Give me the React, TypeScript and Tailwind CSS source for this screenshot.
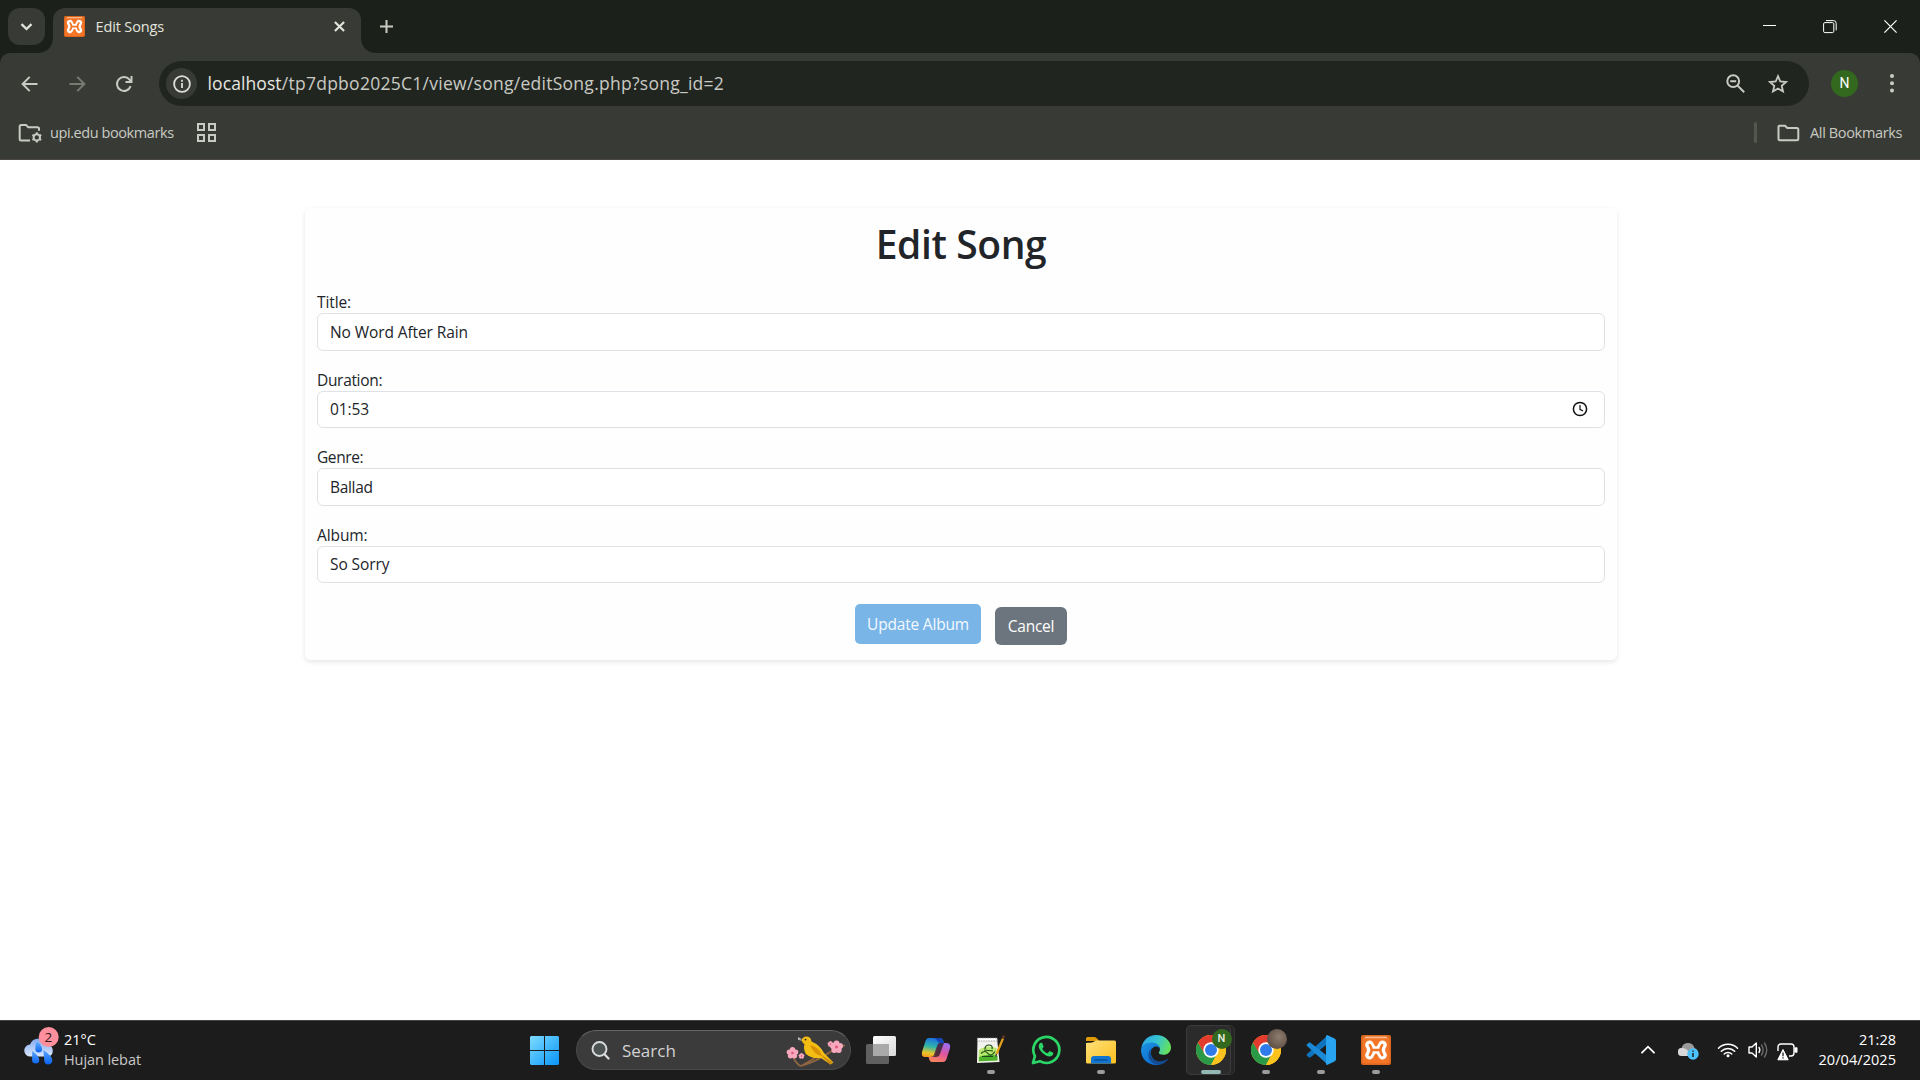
import type { ReactNode } from "react";

function T({ className, children }: { className?: string; children: ReactNode }) {
  return <span className={"whitespace-pre " + (className ?? "")}>{children}</span>;
}

function Xampp({ size }: { size: number }) {
  return (
    <svg width={size} height={size} viewBox="0 0 30 30" fill="none" strokeLinecap="round" strokeLinejoin="round">
      <rect width="30" height="30" rx="2" fill="#d9661c" />
      <rect x="1.5" y="2.5" width="27" height="26" rx="2" fill="#f47527" />
      <path d="M4.5 2.4h21" stroke="#f9b98a" strokeWidth="1.6" />
      <path d="M8.500 9.800Q12 15 8.500 20.200M21.500 9.800Q18 15 21.500 20.200" stroke="#fff" strokeWidth="8.6" />
      <path d="M10 15h10" stroke="#fff" strokeWidth="7.4" />
      <path d="M8.800 10Q12.400 15 8.800 20M21.200 10Q17.600 15 21.200 20M10.800 15h8.400" stroke="#f47527" strokeWidth="2.5" />
    </svg>
  );
}

function TabStrip() {
  return (
    <div className="flex h-[53px] bg-[#1c201b] text-[#e3e4dd]">
      <div className="mt-2 ml-2 flex size-[37px] items-center justify-center rounded-[12px] bg-[#383b35]">
        <svg width="13" height="8" viewBox="0 0 13 8" fill="none" stroke="currentColor" strokeWidth="2.3">
          <path d="M1.5 1.2l5 4.8 5-4.8" />
        </svg>
      </div>
      <svg className="mt-[37px] -ml-2" width="16" height="16" viewBox="0 0 16 16">
        <path d="M16 0v16H0C10 16 16 10 16 0z" fill="#383b35" />
      </svg>
      <div className="mt-2 flex h-[45px] w-[308px] rounded-t-[12px] bg-[#383b35] pl-[11px]">
        <div className="mt-2">
          <Xampp size={21} />
        </div>
        <T className="mt-[7px] ml-[10.5px] text-[14.5px] leading-6 tracking-[-0.14px]">Edit Songs</T>
        <svg className="mt-[13px] mr-[16px] ml-auto" width="11" height="11" viewBox="0 0 11 11" stroke="currentColor" strokeWidth="2.1">
          <path d="M.9.9l9.2 9.2M10.1.9L.9 10.1" />
        </svg>
      </div>
      <svg className="mt-[37px]" width="16" height="16" viewBox="0 0 16 16">
        <path d="M0 0v16h16C6 16 0 10 0 0z" fill="#383b35" />
      </svg>
      <svg className="mt-5 ml-[3px]" width="13" height="13" viewBox="0 0 13 13" stroke="#c9cbc3" strokeWidth="2">
        <path d="M6.5 0v13M0 6.5h13" />
      </svg>
      <div className="mr-[23px] ml-auto flex text-white">
        <svg className="mt-[25px]" width="13" height="1">
          <rect width="13" height="1" fill="#fff" />
        </svg>
        <svg className="mt-5 ml-[47px]" width="14" height="14" viewBox="0 0 14 14" fill="none" stroke="currentColor">
          <rect x=".6" y="2.6" width="10.2" height="10" rx="1.3" />
          <path d="M3 .6h7.5q2.7 0 2.7 2.7v7" />
        </svg>
        <svg className="mt-5 ml-[47px]" width="13" height="13" viewBox="0 0 13 13" stroke="currentColor" strokeWidth="1.2">
          <path d="M.4.4l12.2 12.2M12.6.4L.4 12.6" />
        </svg>
      </div>
    </div>
  );
}

function Toolbar() {
  return (
    <div className="bg-[#1c201b]">
      <div className="flex h-[61px] items-center rounded-t-[10px] bg-[#383b35] text-[#c9cac3]">
        <svg className="ml-[21px]" width="17" height="16" viewBox="0 0 17 16" fill="none" stroke="currentColor" strokeWidth="2">
          <path d="M16.5 8H2M8.7.9L1.6 8l7.1 7.1" />
        </svg>
        <svg className="ml-[31px] text-[#777a73]" width="17" height="16" viewBox="0 0 17 16" fill="none" stroke="currentColor" strokeWidth="2">
          <path d="M.5 8H15M8.3.9L15.4 8l-7.1 7.1" />
        </svg>
        <svg className="ml-[29px]" width="18" height="18" viewBox="0 0 18 18" fill="none" stroke="currentColor" strokeWidth="2">
          <path d="M15.6 11.2A7 7 0 1 1 14.5 4.6L16 6.3" />
          <path d="M16.5 1v6h-6" />
        </svg>
        <div className="ml-[26px] flex h-[45px] w-[1650px] items-center rounded-full bg-[#212520]">
          <div className="ml-[7px] flex size-[31px] items-center justify-center rounded-full bg-[#383b35] text-[#dddeda]">
            <svg width="18" height="18" viewBox="0 0 18 18" fill="none" stroke="currentColor" strokeWidth="1.8">
              <circle cx="9" cy="9" r="7.9" />
              <path d="M9 8v5M9 4.8v1.9" />
            </svg>
          </div>
          <T className="ml-[10.5px] text-[17.5px] tracking-[0.1px] text-[#e6e7e1]">localhost</T>
          <T className="text-[17.5px] tracking-[0.27px]">/tp7dpbo2025C1/view/song/editSong.php?song_id=2</T>
          <svg className="ml-auto" width="19" height="19" viewBox="0 0 19 19" fill="none" stroke="currentColor" strokeWidth="2">
            <circle cx="7.2" cy="7.2" r="5.9" />
            <path d="M11.6 11.6l6.6 6.6M4.2 7.2h6" />
          </svg>
          <svg className="mr-[21px] ml-[23px]" width="20" height="20" viewBox="0 0 20 20" fill="none" stroke="currentColor" strokeWidth="1.8">
            <path d="M10 2.2l2.3 5.3 5.8.5-4.4 3.8 1.3 5.7-5-3-5 3 1.3-5.7L1.9 8l5.8-.5z" />
          </svg>
        </div>
        <div className="ml-[22px] flex size-[27px] items-center justify-center rounded-full bg-[#33691e] font-['Roboto'] text-[14px] text-white">N</div>
        <svg className="ml-[32px]" width="4" height="19" viewBox="0 0 4 19" fill="currentColor">
          <circle cx="2" cy="2" r="2" />
          <circle cx="2" cy="9.3" r="2" />
          <circle cx="2" cy="16.6" r="2" />
        </svg>
      </div>
    </div>
  );
}

function Bookmarks() {
  return (
    <div className="flex h-[46px] items-center border-b border-[#4a4743] bg-[#383b35] pb-[8px] text-[14.5px] text-[#c9cac3]">
      <svg className="mt-[2px] ml-[18px]" width="25" height="21" viewBox="0 0 25 21" fill="none" stroke="currentColor" strokeWidth="2">
        <path d="M12 17.5H3.2q-1.500 0-1.500-1.500V3.400q0-1.500 1.500-1.500H8l2.200 2.300h9.300q1.500 0 1.500 1.500v2" />
        <circle cx="18.800" cy="14.400" r="3.200" />
        <path d="M18.800 9.300v2M18.800 17.500v2M14.400 11.800l1.700 1M21.500 16l1.700 1M14.400 17l1.700-1M21.500 12.800l1.700-1" />
      </svg>
      <T className="ml-[7px] w-[125px] tracking-[-0.42px]">upi.edu bookmarks</T>
      <svg className="ml-[22px]" width="19" height="19" viewBox="0 0 19 19" fill="none" stroke="currentColor" strokeWidth="2">
        <path d="M1 1h6v6H1zM12 1h6v6h-6zM1 12h6v6H1zM12 12h6v6h-6z" />
      </svg>
      <div className="ml-auto h-[21px] w-[3px] rounded-full bg-[#53564f]" />
      <svg className="ml-[20px]" width="23" height="18" viewBox="0 0 23 18" fill="none" stroke="currentColor" strokeWidth="2">
        <path d="M2.300 1.700H8l2.300 2.300h9.500q1.500 0 1.500 1.500v9.300q0 1.500-1.500 1.500H3q-1.500 0-1.500-1.500V2.500z" />
      </svg>
      <T className="mr-[17px] ml-[10px] w-[93px] tracking-[-0.35px]">All Bookmarks</T>
    </div>
  );
}

function Field({ label, value, labelClass, valueClass, clock }: { label: string; value: string; labelClass?: string; valueClass?: string; clock?: boolean }) {
  return (
    <div className="mb-4">
      <div className="h-6 leading-[26px]">
        <T className={labelClass}>{label}</T>
      </div>
      <div className="flex h-[37.6px] items-center rounded-[6px] border border-[#dee2e6] bg-white px-3">
        <T className={"pt-px " + (valueClass ?? "")}>{value}</T>
        {clock && (
          <svg className="mr-[4px] ml-auto" width="16" height="16" viewBox="0 0 16 16" fill="none" stroke="#111" strokeWidth="1.5">
            <circle cx="8" cy="8" r="6.6" />
            <path d="M8 4v4.300l3 1.700" strokeWidth="1.2" />
          </svg>
        )}
      </div>
    </div>
  );
}

function Page() {
  return (
    <main className="h-[860px] bg-white pt-12 pl-[305px] text-[15.5px] text-[#212529]">
      <div className="flex h-[452px] w-[1312px] flex-col rounded-[5px] bg-[#fefefe] px-3 pt-3 shadow-[0_2px_5px_rgba(0,0,0,0.1)]">
        <h1 className="mb-[22px] text-center text-[39px] leading-[47px] font-semibold">
          <T className="tracking-[-0.4px]">Edit Song</T>
        </h1>
        <Field label="Title:" value="No Word After Rain" labelClass="tracking-[-0.1px]" valueClass="tracking-[-0.1px]" />
        <Field label="Duration:" value="01:53" labelClass="tracking-[-0.32px]" valueClass="tracking-[-0.1px]" clock />
        <Field label="Genre:" value="Ballad" labelClass="tracking-[-0.4px]" valueClass="tracking-[-0.33px]" />
        <Field label="Album:" value="So Sorry" labelClass="tracking-[-0.1px]" valueClass="tracking-[-0.1px]" />
        <div className="mt-[4.6px] flex items-start justify-center gap-[14px]">
          <button className="flex h-10 w-[126px] items-center justify-center rounded-[5px] bg-[#7ab5e8] pt-px text-[#f3f9fe]">
            <T className="tracking-[-0.2px]">Update Album</T>
          </button>
          <button className="mt-[3px] flex h-[38px] w-[72px] items-center justify-center rounded-[6px] bg-[#6c757d] pt-px text-white">
            <T className="tracking-[-0.25px]">Cancel</T>
          </button>
        </div>
      </div>
    </main>
  );
}

function Weather() {
  return (
    <svg width="35" height="38" viewBox="0 0 35 38">
      <defs>
        <linearGradient id="cloud" x1="0" y1="0" x2="0" y2="1">
          <stop offset="0" stopColor="#7fa9ee" />
          <stop offset="1" stopColor="#dbe7fb" />
        </linearGradient>
        <linearGradient id="drop" x1="0" y1="0" x2="0" y2="1">
          <stop offset="0" stopColor="#5aa7ff" />
          <stop offset="1" stopColor="#0a62f0" />
        </linearGradient>
      </defs>
      <path d="M6.500 29.500a6 6 0 0 1-.5-12Q8 11.500 15 11.500t9.500 6.500a6 6 0 0 1 0 11.500z" fill="url(#cloud)" />
      <path d="M14.500 15.500q3.500 4 3.500 6.800a3.300 3.300 0 0 1-6.600 0q0-3 .6-6.800z" fill="url(#drop)" />
      <path d="M8.300 24q7 5 7 9a3.600 3.600 0 0 1-7.200 0zM19.300 23q9 6 9 10.300a4 4 0 0 1-8 .2z" fill="url(#drop)" />
      <circle cx="24.700" cy="10" r="10" fill="#ff8f9c" />
    </svg>
  );
}

function Flower({ x, y, s }: { x: number; y: number; s: number }) {
  return (
    <g transform={`translate(${x} ${y}) scale(${s})`}>
      <g fill="#f7a8bd">
        <circle cx="0" cy="-3.600" r="3" />
        <circle cx="3.500" cy="-1" r="3" />
        <circle cx="2.200" cy="3" r="3" />
        <circle cx="-2.200" cy="3" r="3" />
        <circle cx="-3.500" cy="-1" r="3" />
      </g>
      <circle r="1.400" fill="#e0557c" />
    </g>
  );
}

function Bird() {
  return (
    <svg width="60" height="32" viewBox="0 0 60 32" fill="none">
      <path d="M7 21q4 8 8 9Q32 25 44 16q8-3 15-7M15 30l14-8" stroke="#8f6440" strokeWidth="1.700" />
      <path d="M12 4l4.500-.5L12 1z" fill="#b9b9b9" />
      <path d="M12 5.500l5-1v-2z" fill="#777" />
      <path d="M15.500 4.500Q17 0 21 .5q4 .5 4.500 5Q34 9 38 17l9.500 9.500-3 2L35 22q-10 1-15-4-3-5-1.500-10-2-1-3-3.500z" fill="#f4bd14" />
      <path d="M24 9q9 2 12 11-8-1-12-11z" fill="#d99206" />
      <path d="M34 18l13 8.500-3 2z" fill="#c98a10" />
      <circle cx="19.500" cy="3.600" r=".9" fill="#222" />
      <Flower x={6.5} y={17} s={0.9} />
      <Flower x={15.5} y={20} s={0.45} />
      <Flower x={50.5} y={11} s={1} />
      <Flower x={44.5} y={8} s={0.45} />
    </svg>
  );
}

function Copilot() {
  return (
    <svg width="30" height="30" viewBox="0 0 30 30">
      <defs>
        <linearGradient id="cpA" x1=".5" y1="0" x2=".3" y2="1">
          <stop offset="0" stopColor="#1d6fe0" />
          <stop offset=".45" stopColor="#2fb5a8" />
          <stop offset=".8" stopColor="#e8c52a" />
          <stop offset="1" stopColor="#f59a23" />
        </linearGradient>
        <linearGradient id="cpB" x1=".7" y1="0" x2=".3" y2="1">
          <stop offset="0" stopColor="#9a6cf0" />
          <stop offset=".5" stopColor="#e0559f" />
          <stop offset="1" stopColor="#f9845a" />
        </linearGradient>
      </defs>
      <path d="M8 3h11q2.500 0 3.200 2.500L23 8h-4q-2 0-2.700 2.500L13 20q-1 2-3 2H4q-4 0-3-5L4.500 6Q5.500 3 8 3z" fill="url(#cpA)" />
      <path d="M12 3h7q2.500 0 3.200 2.500L23 8h-4q-2-.3-3-2.500T12 3z" fill="#1546b8" />
      <path d="M22 27H11q-2 0-2.500-2L7.500 22H11q2 0 2.700-2.500L17 10q.7-2 3-2h5q5 0 4 5l-3.500 11Q24.500 27 22 27z" fill="url(#cpB)" />
      <path d="M13.500 20.500L17 10q.6-1.700 2.200-2L23 8l-4.500 12q-1 2-3.500 2h-3q1 0 1.500-1.500z" fill="#1c1c1c" opacity=".75" />
    </svg>
  );
}

function NotepadPP() {
  return (
    <svg width="30" height="30" viewBox="0 0 30 30" fill="none">
      <path d="M1.500 3h19.500l2.500 24-22.500 1z" fill="#f2f2ee" />
      <path d="M1.500 3h19.500l.3 3H1.400z" fill="#fff" stroke="#888" strokeWidth=".8" strokeDasharray="1.500 1" />
      <path d="M3 15q8-6 17.500-2l1 12.500-19 1z" fill="#b9e86f" />
      <path d="M3 22q9-4 18.500-1v4.500L3 26.300z" fill="#4fb32d" />
      <path d="M5 18.500q4-4 7 0t7-2M6 21.500h11M9 14q0-4 4-4t3 4M8 15l9 1" stroke="#1d4d16" strokeWidth="1.200" />
      <path d="M20.500 19l6.500-15.500" stroke="#e5a01a" strokeWidth="2.200" />
      <path d="M27 3.500l1-3" stroke="#6b3a2a" strokeWidth="2.200" />
      <path d="M19.700 21.500l.8-2.500" stroke="#444" strokeWidth="1.500" />
    </svg>
  );
}

function WhatsApp() {
  return (
    <svg width="30" height="30" viewBox="0 0 30 30" fill="none">
      <path d="M2 28l1.900-6.900A13 13 0 1 1 8.900 26.200z" stroke="#2bd566" strokeWidth="2.700" strokeLinejoin="round" />
      <path d="M10.200 7.800c.5 0 .9 0 1.200.8l1.100 2.700c.2.600-.2 1.200-1 2-.2.300-.2.500 0 .9 1 1.800 2.700 3.200 4.500 3.900.4.200.7.100.9-.2l1.200-1.400c.3-.4.6-.4 1-.2l2.700 1.300c.5.200.6.500.5 1-.3 2-2 3-3.700 3-4.800-.5-10.300-5.600-10.900-9.800 0-1.800.9-4 2.500-4z" fill="#2bd566" />
    </svg>
  );
}

function Explorer() {
  return (
    <svg width="30" height="30" viewBox="0 0 30 30">
      <defs>
        <linearGradient id="fol" x1="0" y1="0" x2="1" y2="1">
          <stop offset="0" stopColor="#ffe07a" />
          <stop offset="1" stopColor="#fcbf1e" />
        </linearGradient>
      </defs>
      <path d="M0 3.500Q0 2 1.500 2h7q1 0 2 1l3 3H0z" fill="#e09a06" />
      <path d="M0 8q7 0 10-2.500h18.500q1.500 0 1.500 1.500v20q0 1.500-1.500 1.500h-27Q0 28.500 0 27z" fill="url(#fol)" />
      <path d="M5 28.500V24q0-3 3-3h14q3 0 3 3v4.500z" fill="#1275cf" />
      <path d="M8.500 25h13" stroke="#0a4c96" strokeWidth="1.300" />
    </svg>
  );
}

function Edge() {
  return (
    <svg width="30" height="30" viewBox="0 0 30 30">
      <defs>
        <linearGradient id="eg1" x1="0" y1=".2" x2="1" y2=".5">
          <stop offset="0" stopColor="#2aa5ea" />
          <stop offset=".5" stopColor="#35c4d4" />
          <stop offset="1" stopColor="#66e25a" />
        </linearGradient>
        <linearGradient id="eg2" x1="0" y1="0" x2=".6" y2="1">
          <stop offset="0" stopColor="#1c93e0" />
          <stop offset="1" stopColor="#0c6cd0" />
        </linearGradient>
      </defs>
      <path d="M.2 13.500C1.500 5 8 0 15 0c9 0 15 6.500 15 12.500 0 4.500-3.500 7.300-7.500 7.300-3 0-4.700-1-4.700-2 0-.8 1.200-1.500 1.200-3.800 0-3-3-5.500-7-5.500C6 8.500 1 11 .2 13.500z" fill="url(#eg1)" />
      <path d="M0 15C0 11 4.500 7.500 11 7.500c4.500 0 8 3 8 6.500-1.500-2.500-4-3-6-2-3 1.500-4 5-2.500 9 1.500 4.500 6 8.500 9.500 8.300-1.600.5-3 .7-5 .7C6.500 30 0 23.500 0 15z" fill="url(#eg2)" />
      <path d="M11 12.800c-2.700 3-1.700 8 1.500 11 4 4 11.500 3 15.500-1-2 3.500-5 6.200-9 6.900C13 30 7.500 26.500 7.500 20c0-3 1.500-6 3.500-7.200z" fill="#134c92" />
    </svg>
  );
}

function Chrome({ badge }: { badge: ReactNode }) {
  return (
    <div className="relative size-[30px]">
      <svg width="30" height="30" viewBox="0 0 30 30">
        <circle cx="15" cy="15" r="15" fill="#fcc31e" />
        <path d="M2 7.500L8.900 18.800 15 22.200 21 18.500 15 30A15 15 0 0 1 2 7.500z" fill="#2a9a49" />
        <path d="M15 30l6.200-11.200L28 7.500A15 15 0 0 1 15 30z" fill="#fcc31e" />
        <path d="M2 7.500A15 15 0 0 1 28 7.500H15L8.500 18.600z" fill="#e33b2e" />
        <circle cx="15" cy="15" r="7.700" fill="#fff" />
        <circle cx="15" cy="15" r="6" fill="#2f7bea" />
      </svg>
      <div className="absolute -top-[6px] left-[15.5px]">{badge}</div>
    </div>
  );
}

function VSCode() {
  return (
    <svg width="30" height="30" viewBox="0 0 30 30">
      <path d="M21.500.5L1 19q-1 1 0 1.800l1.700 1.500q.8.600 1.800 0L22 8.500z" fill="#0f74bd" />
      <path d="M21.500 29.500L1 11q-1-1 0-1.800l1.700-1.500q.8-.6 1.800 0L22 21.500z" fill="#1a8ad6" />
      <path d="M21.500.2l7 3.300q1.500.8 1.500 2.300v18.400q0 1.500-1.500 2.300l-7 3.300q-1 .4-1.500-.8V1Q20.500-.2 21.500.2z" fill="#28a4f0" />
    </svg>
  );
}

function Cell({ children, dot = true }: { children: ReactNode; dot?: boolean }) {
  return (
    <div className="flex w-[55px] flex-col items-center pt-[14px]">
      {children}
      {dot && <div className="mt-[5px] h-1 w-2 rounded-full bg-[#9b9b9b]" />}
    </div>
  );
}

function Taskbar() {
  return (
    <div className="flex h-[60px] border-t border-[#404343] bg-[#1c1c1c] text-[14.5px] text-white">
      <div className="relative mt-[6px] ml-[24px]">
        <Weather />
        <span className="absolute top-0 left-[20.5px] text-[13.5px] leading-5 text-[#2a1215]">2</span>
      </div>
      <div className="mt-[9px] ml-[5px] flex w-[453px] flex-col items-start leading-5">
        <T>21°C</T>
        <T className="tracking-[-0.08px] text-[#c8c8c8]">Hujan lebat</T>
      </div>
      <Cell dot={false}>
        <svg className="mt-px" width="29" height="29" viewBox="0 0 29 29">
          <defs>
            <linearGradient id="win" x1="0" y1="0" x2="1" y2="1">
              <stop offset="0" stopColor="#7edcff" />
              <stop offset="1" stopColor="#0894fa" />
            </linearGradient>
          </defs>
          <path d="M1 0h13v14H0V1zM15 0h13l1 1v13H15zM0 15h14v14H1l-1-1zM15 15h14v13l-1 1H15z" fill="url(#win)" />
        </svg>
      </Cell>
      <div className="mt-[9px] ml-1 flex h-10 w-[275px] items-center rounded-full border border-[#4a4a4a] border-t-[#666] bg-[#3b3b3b]">
        <svg className="ml-[14px]" width="19" height="19" viewBox="0 0 19 19" fill="none" stroke="#d9dcdc" strokeWidth="1.900" strokeLinecap="round">
          <circle cx="8.500" cy="8" r="7" fill="#4d5252" />
          <path d="M13.500 13.300l4 4.200" strokeWidth="2.300" />
        </svg>
        <T className="ml-[12px] pt-[2px] text-[17px] text-[#d2d2d2]">Search</T>
        <div className="mt-[4px] mr-[4px] ml-auto">
          <Bird />
        </div>
      </div>
      <div className="ml-[2.5px] flex">
        <Cell dot={false}>
          <svg width="30" height="30" viewBox="0 0 30 30">
            <defs>
              <linearGradient id="tv" x1="0" y1="0" x2="1" y2="1">
                <stop offset="0" stopColor="#fff" />
                <stop offset="1" stopColor="#d8d8d8" />
              </linearGradient>
            </defs>
            <rect y="9" width="23" height="20" rx="1.500" fill="#606060" />
            <rect x="7" y="1" width="23" height="20" rx="1.500" fill="url(#tv)" />
            <rect x="7" y="9" width="16" height="12" fill="#a9a9a9" />
          </svg>
        </Cell>
        <Cell dot={false}><Copilot /></Cell>
        <Cell><NotepadPP /></Cell>
        <Cell dot={false}><WhatsApp /></Cell>
        <Cell><Explorer /></Cell>
        <Cell dot={false}><Edge /></Cell>
        <div className="flex w-[55px] pt-[4px] pl-[2.5px]">
          <div className="flex h-[50px] w-[49px] rounded-[5px] border border-[#333] bg-[#252525]">
            <div className="-mt-px -ml-px flex h-[50px] w-[45px] flex-col items-center rounded-[5px] border border-[#3b3b3b] bg-[#2b2b2b] pt-[9px] pl-[5px]">
              <Chrome badge={<div className="flex size-5 items-center justify-center rounded-full bg-[#33691e] font-['Roboto'] text-[11px] font-medium text-[#e8efe4]">N</div>} />
              <div className="mt-[5px] h-1 w-5 shrink-0 rounded-full bg-[#93b8b3]" />
            </div>
          </div>
        </div>
        <Cell>
          <Chrome badge={<div className="size-5 rounded-full bg-[radial-gradient(circle_at_60%_40%,#8d7d70,#6b5a4f_55%,#4d4038)]" />} />
        </Cell>
        <Cell><VSCode /></Cell>
        <Cell><Xampp size={30} /></Cell>
      </div>
      <svg className="mt-[24px] ml-[237px]" width="14" height="9" viewBox="0 0 14 9" fill="none" stroke="#fff" strokeWidth="1.800" strokeLinecap="round">
        <path d="M1 7.700l6-6 6 6" />
      </svg>
      <svg className="mt-[21px] ml-[23px]" width="21" height="18" viewBox="0 0 21 18">
        <path d="M4 14a4 4 0 0 1-.5-8Q5 1 10 1t6.500 5q3 1 3 4t-3 4z" fill="#9a9a9a" />
        <path d="M4 14a4 4 0 0 1 0-8q4 0 6 3l3 5z" fill="#d8d8d8" />
        <circle cx="15" cy="12" r="5.700" fill="#4cc2ff" />
        <path d="M15 11v4M15 8.500v1.300" stroke="#1c1c1c" strokeWidth="1.500" />
      </svg>
      <svg className="mt-[21px] ml-[18px]" width="22" height="16" viewBox="0 0 22 16" fill="none" stroke="#fff" strokeWidth="1.500" strokeLinecap="round">
        <path d="M1.500 6.200a13.300 13.300 0 0 1 19 0M4.300 9.200a9.400 9.400 0 0 1 13.400 0M7.200 12a5.400 5.400 0 0 1 7.600 0" />
        <circle cx="11" cy="13.800" r="1.500" fill="#fff" stroke="none" />
      </svg>
      <svg className="mt-[19px] ml-[9px]" width="21" height="20" viewBox="0 0 21 20" fill="none" stroke="#fff" strokeWidth="1.400" strokeLinecap="round" strokeLinejoin="round">
        <path d="M1 7h3l4.300-4v14L4 13H1z" />
        <path d="M11 7.500q1.700 2.500 0 5" />
        <path d="M13.500 5q3.300 5 0 10M16.500 3q4.500 7 0 14" stroke="#6a6a6a" />
      </svg>
      <svg className="mt-[22px] ml-[8.5px]" width="21" height="18" viewBox="0 0 21 18" fill="none" stroke="#fff" strokeWidth="1.400" strokeLinejoin="round">
        <path d="M1 8V4q0-3 3-3h10q3 0 3 3v6q0 3-3 3h-2M18.500 5h1.300v4h-1.300z" />
        <path d="M6 6.500L.8 16.800h10.400z" fill="#fff" strokeWidth="1" />
        <path d="M6 9.500v3.700M6 14.300v1.300" stroke="#1c1c1c" strokeWidth="1.300" />
      </svg>
      <div className="mt-[9px] mr-6 ml-auto flex flex-col items-end leading-5">
        <T>21:28</T>
        <T className="tracking-[0.05px]">20/04/2025</T>
      </div>
    </div>
  );
}

export default function App() {
  return (
    <div className="h-[1080px] w-[1920px] overflow-hidden font-['Open_Sans','Noto_Sans',sans-serif]">
      <TabStrip />
      <Toolbar />
      <Bookmarks />
      <Page />
      <Taskbar />
    </div>
  );
}
